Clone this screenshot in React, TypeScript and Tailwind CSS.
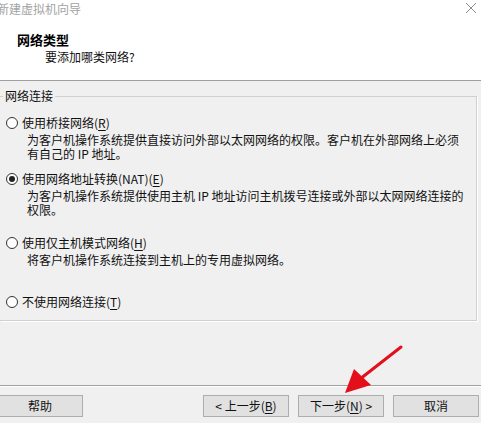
import React from "react";

const FONT = { fontFamily: '"Noto Sans CJK SC", "Microsoft YaHei", sans-serif' };

function Radio({ checked }: { checked?: boolean }) {
  return (
    <span className="flex h-[12px] w-[12px] shrink-0 items-center justify-center rounded-full border border-[#333333] bg-white">
      {checked && <span className="h-[6px] w-[6px] rounded-full bg-[#222222]" />}
    </span>
  );
}

function Option({
  label,
  hotkey,
  suffix,
  checked,
  lines,
  className,
}: {
  label: string;
  hotkey: string;
  suffix?: string;
  checked?: boolean;
  lines?: string[];
  className?: string;
}) {
  return (
    <div className={className}>
      <div className="flex h-[16px] items-center gap-[4px] pl-[6px] leading-[16px]">
        <Radio checked={checked} />
        <span>
          {label}(<span className="underline underline-offset-2">{hotkey}</span>){suffix}
        </span>
      </div>
      {lines && (
        <div className="mt-[2px] pl-[27px] leading-[14px]">
          {lines.map((l) => (
            <div key={l} className="whitespace-nowrap">
              {l}
            </div>
          ))}
        </div>
      )}
    </div>
  );
}

function Btn({ children, className = "" }: { children: React.ReactNode; className?: string }) {
  return (
    <button
      type="button"
      className={`flex h-[22px] w-[86px] shrink-0 items-center justify-center border border-[#adadad] bg-[#e1e1e1] text-[12px] leading-[16px] text-[#111] ${className}`}
    >
      {children}
    </button>
  );
}

export default function App() {
  return (
    <div
      className="relative h-[423px] w-[481px] overflow-hidden bg-[#f0f0f0] text-[12px] text-[#111]"
      style={FONT}
    >
      {/* header */}
      <div className="relative h-[81px] border-b border-[#a0a0a0] bg-white">
        <div className="ml-[-3px] flex h-[17px] items-center leading-[16px] text-[#a3a3a3]">
          新建虚拟机向导
        </div>
        <svg
          className="absolute right-[4px] top-[2px]"
          width="12"
          height="12"
          viewBox="0 0 12 12"
          aria-hidden
        >
          <path d="M1 1 L11 11 M11 1 L1 11" stroke="#8c8c8c" strokeWidth="1" fill="none" />
        </svg>
        <div className="mt-[15px] pl-[17px] text-[13px] font-bold leading-[16px] text-black">网络类型</div>
        <div className="mt-[1px] pl-[45px] leading-[16px]">要添加哪类网络?</div>
      </div>

      {/* group box */}
      <fieldset className="mt-[7px] w-[477px] border border-l-0 border-[#d0d0d0] pb-[10px] shadow-[1px_1px_0_#ffffff]">
        <legend className="ml-[3px] px-[2px] leading-[16px]">网络连接</legend>
        <Option
          className="mt-[11px]"
          label="使用桥接网络"
          hotkey="R"
          lines={["为客户机操作系统提供直接访问外部以太网网络的权限。客户机在外部网络上必须", "有自己的 IP 地址。"]}
        />
        <Option
          className="mt-[10px]"
          label="使用网络地址转换(NAT)"
          hotkey="E"
          checked
          lines={["为客户机操作系统提供使用主机 IP 地址访问主机拨号连接或外部以太网网络连接的", "权限。"]}
        />
        <Option
          className="mt-[18px]"
          label="使用仅主机模式网络"
          hotkey="H"
          lines={["将客户机操作系统连接到主机上的专用虚拟网络。"]}
        />
        <Option className="mt-[27px]" label="不使用网络连接" hotkey="T" />
      </fieldset>

      {/* footer */}
      <div className="mt-[64px] border-t border-b border-t-[#a0a0a0] border-b-white" />
      <div className="mt-[8px] flex items-center">
        <Btn className="ml-[-3px]">帮助</Btn>
        <div className="ml-[120px] flex gap-[9px]">
          <Btn>
            &lt; 上一步(<span className="underline underline-offset-2">B</span>)
          </Btn>
          <Btn>
            下一步(<span className="underline underline-offset-2">N</span>) &gt;
          </Btn>
          <Btn>取消</Btn>
        </div>
      </div>

      {/* red annotation arrow */}
      <svg
        className="pointer-events-none absolute left-0 top-0"
        width="481"
        height="423"
        viewBox="0 0 481 423"
        aria-hidden
      >
        <line x1="401" y1="347" x2="360" y2="379" stroke="#e3101c" strokeWidth="3" strokeLinecap="round" />
        <polygon points="354,369 371,385 345,393" fill="#e3101c" />
      </svg>
    </div>
  );
}
